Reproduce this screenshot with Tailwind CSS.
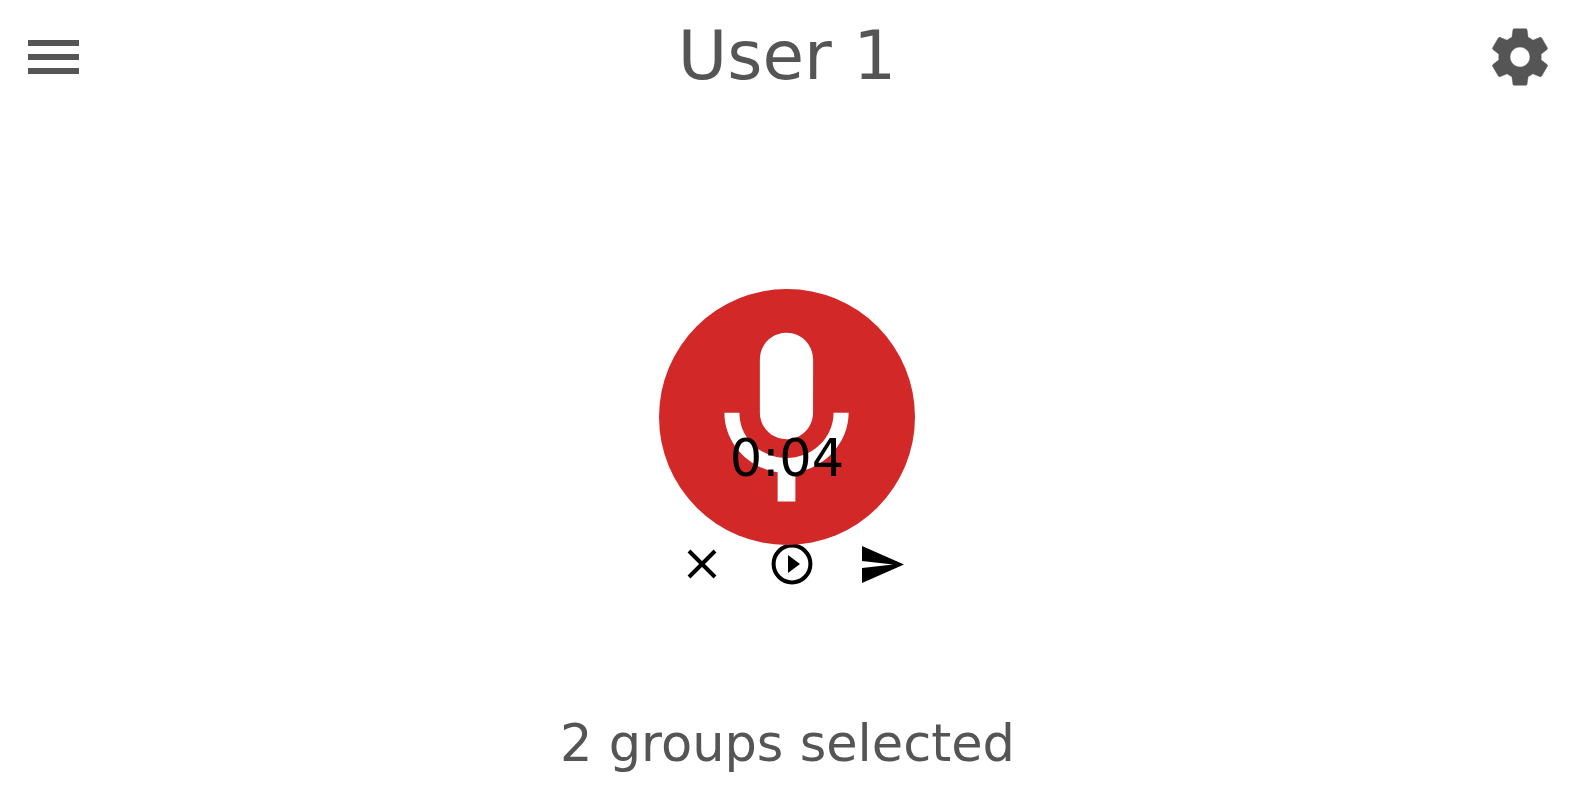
<!DOCTYPE html>
<html lang="en">
    <head>
        <meta charset="utf-8">
        <title>User 1</title>
        <script src="https://cdn.jsdelivr.net/npm/@tailwindcss/browser@4"></script>
    </head>
    <body class="bg-white h-[795px] overflow-hidden font-['DejaVu_Sans',sans-serif] text-[#555555]">
        <header class="h-[113px] grid grid-cols-[1fr_auto_1fr] items-center">
            <button class="ml-[28px] w-[51px] flex flex-col gap-[8px]">
                <span class="block h-[6px] bg-[#555555]"></span>
                <span class="block h-[6px] bg-[#555555]"></span>
                <span class="block h-[6px] bg-[#555555]"></span>
            </button>
            <h1 class="text-[67.6px] leading-none -mt-[1px] -ml-[1px]">User 1</h1>
            <button class="justify-self-end mr-[21px]">
                <svg class="w-[68px] h-[68px] block" viewBox="0 0 24 24" fill="#555555"><path d="M19.43 12.98c.04-.32.07-.64.07-.98s-.03-.66-.07-.98l2.11-1.65c.19-.15.24-.42.12-.64l-2-3.46c-.12-.22-.39-.3-.61-.22l-2.49 1c-.52-.4-1.08-.73-1.69-.98l-.38-2.65C14.46 2.18 14.25 2 14 2h-4c-.25 0-.46.18-.49.42l-.38 2.65c-.61.25-1.17.59-1.69.98l-2.49-1c-.23-.09-.49 0-.61.22l-2 3.46c-.13.22-.07.49.12.64l2.11 1.65c-.04.32-.07.65-.07.98s.03.66.07.98l-2.11 1.65c-.19.15-.24.42-.12.64l2 3.46c.12.22.39.3.61.22l2.49-1c.52.4 1.08.73 1.69.98l.38 2.65c.03.24.24.42.49.42h4c.25 0 .46-.18.49-.42l.38-2.65c.61-.25 1.17-.59 1.69-.98l2.49 1c.23.09.49 0 .61-.22l2-3.46c.12-.22.07-.49-.12-.64l-2.11-1.65zM12 15.5c-1.93 0-3.5-1.57-3.5-3.5s1.57-3.5 3.5-3.5 3.5 1.57 3.5 3.5-1.57 3.5-3.5 3.5z" stroke="#555555" stroke-width="0.15"/></svg>
            </button>
        </header>
        <main class="flex flex-col items-center">
            <div class="relative mt-[176px] -ml-[1px] w-[256px] h-[256px] rounded-full bg-[#d32828] flex items-center justify-center">
                <svg class="w-[213px] h-[213px] block mt-[9px] -ml-[1px]" viewBox="0 0 24 24" fill="#ffffff"><path d="M12 14c1.66 0 2.99-1.34 2.99-3L15 5c0-1.66-1.34-3-3-3S9 3.34 9 5v6c0 1.66 1.34 3 3 3zm5.3-3c0 3-2.54 5.1-5.3 5.1S6.7 14 6.7 11H5c0 3.41 2.72 6.23 6 6.72V21h2v-3.28c3.28-.48 6-3.3 6-6.72h-1.7z"/></svg>
                <span class="absolute left-0 right-0 top-[140px] text-center text-[51px] leading-[60px] text-black">0:04</span>
            </div>
            <div class="w-[256px] h-[40px] -mt-[1px] -ml-[1px] pl-[28px] flex items-center">
                <svg class="w-[30px] h-[30px] block" viewBox="0 0 30 30" fill="none" stroke="#000000" stroke-width="4"><path d="M2 2 L28 28 M28 2 L2 28"/></svg>
                <svg class="w-[42px] h-[42px] block ml-[54px]" viewBox="0 0 42 42"><circle cx="21" cy="21" r="18.4" fill="none" stroke="#000000" stroke-width="4"/><path d="M17 12 L29 21 L17 30 Z" fill="#000000"/></svg>
                <svg class="w-[42px] h-[37px] block ml-[49px]" viewBox="0 0 42 37" fill="#000000"><path d="M0 0 L42 18.5 L0 37 L0 22 L31 18.5 L0 15 Z"/></svg>
            </div>
            <p class="mt-[130px] text-[51px] leading-[60px]">2 groups selected</p>
        </main>
    </body>
</html>
